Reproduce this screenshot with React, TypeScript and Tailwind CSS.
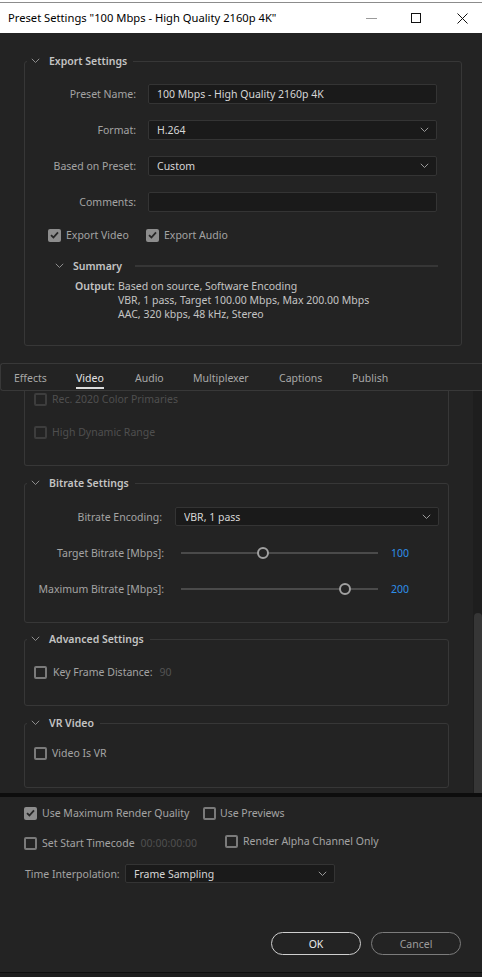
import React from "react";

function Chev({ color = "#8e8e8e" }: { color?: string }) {
  return (
    <svg width="9" height="6" viewBox="0 0 9 6" className="shrink-0">
      <path d="M0.8 0.8 L4.5 4.5 L8.2 0.8" fill="none" stroke={color} strokeWidth="1" />
    </svg>
  );
}

function Check({ checked = false, disabled = false }: { checked?: boolean; disabled?: boolean }) {
  if (checked) {
    return (
      <span className="w-[13px] h-[13px] rounded-[2px] bg-[#8d8d8d] flex items-center justify-center shrink-0">
        <svg width="9" height="8" viewBox="0 0 9 8">
          <path d="M1 4.2 L3.4 6.5 L8 1.3" fill="none" stroke="#262626" strokeWidth="1.8" />
        </svg>
      </span>
    );
  }
  return (
    <span
      className={`w-[13px] h-[13px] rounded-[2px] border-2 shrink-0 ${
        disabled ? "border-[#3d3d3d]" : "border-[#7a7a7a]"
      }`}
    />
  );
}

function Group({
  title,
  className = "",
  children,
}: {
  title: string;
  className?: string;
  children: React.ReactNode;
}) {
  return (
    <fieldset className={`border border-[#373737] rounded-[3px] ${className}`}>
      <legend className="ml-[2px] px-[3px]">
        <span className="flex items-center h-[14px] pl-[1px] pr-[3px]">
          <Chev />
          <span className="ml-[9px] font-semibold leading-[14px] text-[#c4c4c4]">{title}</span>
        </span>
      </legend>
      {children}
    </fieldset>
  );
}

function Box({
  children,
  select = false,
  className = "",
}: {
  children?: React.ReactNode;
  select?: boolean;
  className?: string;
}) {
  return (
    <div
      className={`flex items-center bg-[#1a1a1a] border border-[#343434] rounded-[2px] pl-[8px] pr-[7px] text-[#d6d6d6] ${className}`}
    >
      <span className="flex-1 truncate">{children}</span>
      {select && <Chev color="#9a9a9a" />}
    </div>
  );
}

function Slider({ label, pct, value }: { label: string; pct: number; value: string }) {
  return (
    <div className="flex items-center h-[14px]">
      <span className="w-[139px] text-right">{label}</span>
      <div className="ml-[17px] w-[197px] h-[2px] bg-[#4a4a4a] relative">
        <span
          className="absolute top-[-5px] w-[12px] h-[12px] rounded-full border-2 border-[#a0a0a0] bg-[#232323]"
          style={{ left: `calc(${pct}% - 6px)` }}
        />
      </div>
      <span className="ml-[13px] text-[#2e8fe8]">{value}</span>
    </div>
  );
}

const tabs: { name: string; w: string; active?: boolean }[] = [
  { name: "Effects", w: "w-[62px]" },
  { name: "Video", w: "w-[59px]", active: true },
  { name: "Audio", w: "w-[58px]" },
  { name: "Multiplexer", w: "w-[86px]" },
  { name: "Captions", w: "w-[73px]" },
  { name: "Publish", w: "w-[60px]" },
];

export default function App() {
  return (
    <div className="w-[482px] h-[977px] bg-[#232323] flex flex-col overflow-hidden font-['Noto_Sans',sans-serif] text-[10.5px] leading-[14px] text-[#a3a3a3]">
      {/* Title bar */}
      <div className="bg-white pt-[2px] shrink-0">
        <div className="border-t border-[#8c8c8c] h-[31px] flex items-center pl-[8px] text-[11.2px] text-black">
          <span className="flex-1 whitespace-nowrap">Preset Settings "100 Mbps - High Quality 2160p 4K"</span>
          <svg width="11" height="10" viewBox="0 0 11 10" className="mr-[34px]">
            <path d="M0 5.5 H11" stroke="#9a9a9a" strokeWidth="1" />
          </svg>
          <svg width="10" height="10" viewBox="0 0 10 10" className="mr-[36px]">
            <rect x="0.5" y="0.5" width="9" height="9" fill="none" stroke="#111" strokeWidth="1" />
          </svg>
          <svg width="11" height="11" viewBox="0 0 11 11" className="mr-[14px]">
            <path d="M0.5 0.5 L10.5 10.5 M10.5 0.5 L0.5 10.5" stroke="#111" strokeWidth="1" />
          </svg>
        </div>
      </div>

      {/* Export settings */}
      <div className="pl-[24px] pt-[21px] shrink-0">
        <Group title="Export Settings" className="w-[438px] pb-[24px]">
          <div className="flex flex-col gap-[16px] pt-[16px]">
            <div className="flex items-center h-[20px]">
              <span className="w-[111px] text-right">Preset Name:</span>
              <Box className="ml-[12px] w-[289px] h-[20px]">100 Mbps - High Quality 2160p 4K</Box>
            </div>
            <div className="flex items-center h-[20px]">
              <span className="w-[111px] text-right">Format:</span>
              <Box select className="ml-[12px] w-[289px] h-[20px]">H.264</Box>
            </div>
            <div className="flex items-center h-[20px]">
              <span className="w-[111px] text-right">Based on Preset:</span>
              <Box select className="ml-[12px] w-[289px] h-[20px]">Custom</Box>
            </div>
            <div className="flex items-center h-[20px]">
              <span className="w-[111px] text-right">Comments:</span>
              <Box className="ml-[12px] w-[289px] h-[20px]" />
            </div>
            <div className="flex items-center h-[14px] pl-[23px]">
              <div className="w-[98px] flex items-center">
                <Check checked />
                <span className="ml-[5px]">Export Video</span>
              </div>
              <Check checked />
              <span className="ml-[5px]">Export Audio</span>
            </div>
          </div>
          <div className="flex items-center h-[14px] mt-[17px] pl-[30px] pr-[23px]">
            <Chev />
            <span className="ml-[9px] font-semibold text-[#c4c4c4]">Summary</span>
            <span className="flex-1 ml-[13px] h-[2px] bg-[#363636]" />
          </div>
          <div className="flex mt-[6px] pl-[50px] text-[#c4c4c4]">
            <span className="w-[43px] font-semibold">Output:</span>
            <div className="flex flex-col">
              <span>Based on source, Software Encoding</span>
              <span>VBR, 1 pass, Target 100.00 Mbps, Max 200.00 Mbps</span>
              <span>AAC, 320 kbps, 48 kHz, Stereo</span>
            </div>
          </div>
        </Group>
      </div>

      {/* Tabs */}
      <div className="mt-[17px] h-[28px] border-y border-l border-[#383838] rounded-l-[3px] flex pl-[13px] shrink-0">
        {tabs.map((t) => (
          <div key={t.name} className={`${t.w} pt-[7px]`}>
            <span
              className={`inline-block pb-[2px] border-b-2 ${
                t.active ? "border-[#dcdcdc] text-[#e4e4e4]" : "border-transparent text-[#a8a8a8]"
              }`}
            >
              {t.name}
            </span>
          </div>
        ))}
      </div>

      {/* Scroll area */}
      <div className="h-[402px] flex shrink-0">
        <div className="w-[473px] overflow-hidden flex flex-col">
          <div className="ml-[24px] w-[425px] h-[75px] border-x border-b border-[#373737] rounded-b-[3px] pl-[9px] pt-[1px] text-[#4f4f4f]">
            <div className="flex items-center h-[14px]">
              <Check disabled />
              <span className="ml-[5px]">Rec. 2020 Color Primaries</span>
            </div>
            <div className="flex items-center h-[14px] mt-[19px]">
              <Check disabled />
              <span className="ml-[5px]">High Dynamic Range</span>
            </div>
          </div>

          <Group title="Bitrate Settings" className="ml-[24px] mt-[10px] w-[425px] pb-[26px]">
            <div className="flex items-center h-[19px] mt-[17px]">
              <span className="w-[137px] text-right">Bitrate Encoding:</span>
              <Box select className="ml-[13px] w-[264px] h-[19px]">VBR, 1 pass</Box>
            </div>
            <div className="mt-[20px]">
              <Slider label="Target Bitrate [Mbps]:" pct={41.6} value="100" />
            </div>
            <div className="mt-[22px]">
              <Slider label="Maximum Bitrate [Mbps]:" pct={83.2} value="200" />
            </div>
          </Group>

          <Group title="Advanced Settings" className="ml-[24px] mt-[9px] w-[425px] pb-[26px]">
            <div className="flex items-center h-[14px] mt-[19px] pl-[9px]">
              <Check />
              <span className="ml-[6px]">Key Frame Distance:</span>
              <span className="ml-[7px] text-[#535353]">90</span>
            </div>
          </Group>

          <Group title="VR Video" className="ml-[24px] mt-[10px] w-[425px] pb-[27px]">
            <div className="flex items-center h-[14px] mt-[16px] pl-[9px]">
              <Check />
              <span className="ml-[5px]">Video Is VR</span>
            </div>
          </Group>
        </div>
        <div className="w-[9px] bg-[#1e1e1e] flex flex-col">
          <div className="mt-[222px] h-[180px] ml-[1px] rounded-t-[4px] bg-[#363636]" />
        </div>
      </div>

      <div className="h-[4px] bg-[#0d0d0d] shrink-0" />

      {/* Bottom section */}
      <div className="flex-1 flex flex-col pl-[24px]">
        <div className="flex items-center h-[14px] mt-[9px]">
          <div className="w-[179px] flex items-center">
            <Check checked />
            <span className="ml-[5px]">Use Maximum Render Quality</span>
          </div>
          <Check />
          <span className="ml-[4px]">Use Previews</span>
        </div>
        <div className="flex items-center h-[14px] mt-[16px]">
          <div className="w-[201px] flex items-center">
            <Check />
            <span className="ml-[5px]">Set Start Timecode</span>
            <span className="ml-[6px] text-[#4f4f4f]">00:00:00:00</span>
          </div>
          <div className="flex items-center -mt-[4px]">
            <Check />
            <span className="ml-[5px]">Render Alpha Channel Only</span>
          </div>
        </div>
        <div className="flex items-center h-[19px] mt-[14px]">
          <span className="w-[101px] pl-[1px]">Time Interpolation:</span>
          <Box select className="w-[210px] h-[19px]">Frame Sampling</Box>
        </div>
        <div className="flex justify-end pr-[21px] mt-[49px] gap-[10px]">
          <button className="w-[90px] h-[23px] rounded-full border border-[#cfcfcf] text-[#eaeaea] text-[10.5px]">OK</button>
          <button className="w-[90px] h-[23px] rounded-full border border-[#7c7c7c] text-[#9c9c9c] text-[10.5px]">Cancel</button>
        </div>
        <div className="mt-auto -ml-[24px] h-[5px] border-t border-[#0e0e0e] bg-[#1d1d1d]" />
      </div>
    </div>
  );
}
